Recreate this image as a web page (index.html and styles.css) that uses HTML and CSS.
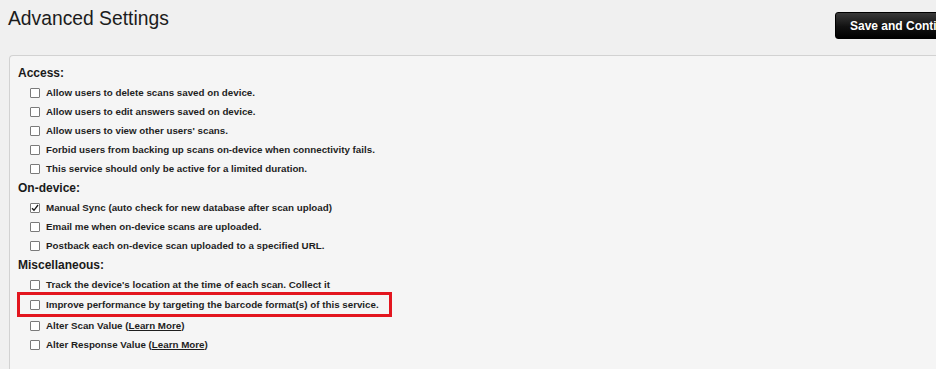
FILE: index.html
```html
<!DOCTYPE html>
<html lang="en">
<head>
<meta charset="utf-8">
<title>Advanced Settings</title>
<link rel="stylesheet" href="styles.css">
</head>
<body>
<div class="page">
  <header class="top">
    <h1 class="title">Advanced Settings</h1>
    <button class="save" type="button">Save and Continue</button>
  </header>
  <section class="panel">
    <h2 class="group">Access:</h2>
    <ul class="opts">
      <li class="opt"><span class="box"></span><span>Allow users to delete scans saved on device.</span></li>
      <li class="opt"><span class="box"></span><span>Allow users to edit answers saved on device.</span></li>
      <li class="opt"><span class="box"></span><span>Allow users to view other users' scans.</span></li>
      <li class="opt"><span class="box"></span><span>Forbid users from backing up scans on-device when connectivity fails.</span></li>
      <li class="opt"><span class="box"></span><span>This service should only be active for a limited duration.</span></li>
    </ul>
    <h2 class="group">On-device:</h2>
    <ul class="opts">
      <li class="opt"><span class="box checked"><svg viewBox="0 0 8 8" width="8" height="8"><path d="M1 4.2 L3 6.3 L7 1" fill="none" stroke="#1a1a1a" stroke-width="1.3"/></svg></span><span>Manual Sync (auto check for new database after scan upload)</span></li>
      <li class="opt"><span class="box"></span><span>Email me when on-device scans are uploaded.</span></li>
      <li class="opt"><span class="box"></span><span>Postback each on-device scan uploaded to a specified URL.</span></li>
    </ul>
    <h2 class="group">Miscellaneous:</h2>
    <ul class="opts">
      <li class="opt"><span class="box"></span><span>Track the device's location at the time of each scan. Collect it</span></li>
      <li class="opt highlight"><span class="box"></span><span>Improve performance by targeting the barcode format(s) of this service.</span></li>
      <li class="opt"><span class="box"></span><span>Alter Scan Value (<a class="more" href="#">Learn More</a>)</span></li>
      <li class="opt"><span class="box"></span><span>Alter Response Value (<a class="more" href="#">Learn More</a>)</span></li>
    </ul>
  </section>
</div>
</body>
</html>
```
FILE: styles.css
```css
html, body {
  margin: 0;
  padding: 0;
  overflow: hidden;
  background: #f0f0f0;
}

body {
  font-family: "Liberation Sans", Arial, sans-serif;
  color: #1e1e1e;
}

.page {
  width: 980px;
}

.top {
  height: 55px;
  box-sizing: border-box;
  padding: 8px 9px 0 8px;
  display: flex;
  justify-content: space-between;
  align-items: flex-start;
}

.title {
  margin: 0;
  font-size: 19.3px;
  font-weight: normal;
  line-height: 22px;
  color: #1c1c1c;
}

.save {
  margin-top: 4px;
  width: 136px;
  height: 27px;
  box-sizing: border-box;
  padding: 0 0 0 14px;
  text-align: left;
  border: 1px solid #000;
  border-radius: 3px;
  background: linear-gradient(#3a3a3a, #111 55%, #000);
  color: #fff;
  font-family: "Liberation Sans", Arial, sans-serif;
  font-weight: bold;
  font-size: 12px;
}

.panel {
  margin-left: 9px;
  min-height: 330px;
  border: 1px solid #d2d2d2;
  border-right: none;
  border-radius: 4px 0 0 0;
  background: #f5f5f5;
  padding: 7px 0 0 8px;
}

.group {
  margin: 0;
  font-size: 12px;
  font-weight: bold;
  line-height: 20px;
  color: #1a1a1a;
}

.opts {
  list-style: none;
  margin: 0;
  padding: 0;
}

.opt {
  display: flex;
  align-items: center;
  gap: 6px;
  height: 19px;
  padding-left: 12px;
  font-size: 9.78px;
  font-weight: bold;
  color: #1e1e1e;
}

.box {
  width: 10px;
  height: 10px;
  box-sizing: border-box;
  border: 1px solid #7a7a7a;
  border-radius: 1px;
  background: #fff;
  display: flex;
  align-items: center;
  justify-content: center;
  flex: none;
}

.box svg {
  display: block;
}

.highlight {
  width: fit-content;
  margin: 1px 0 2px 2px;
  padding-left: 10px;
  padding-right: 10px;
  outline: 3px solid #e3161f;
}

.more {
  color: #1e1e1e;
  text-decoration: underline;
}
```
